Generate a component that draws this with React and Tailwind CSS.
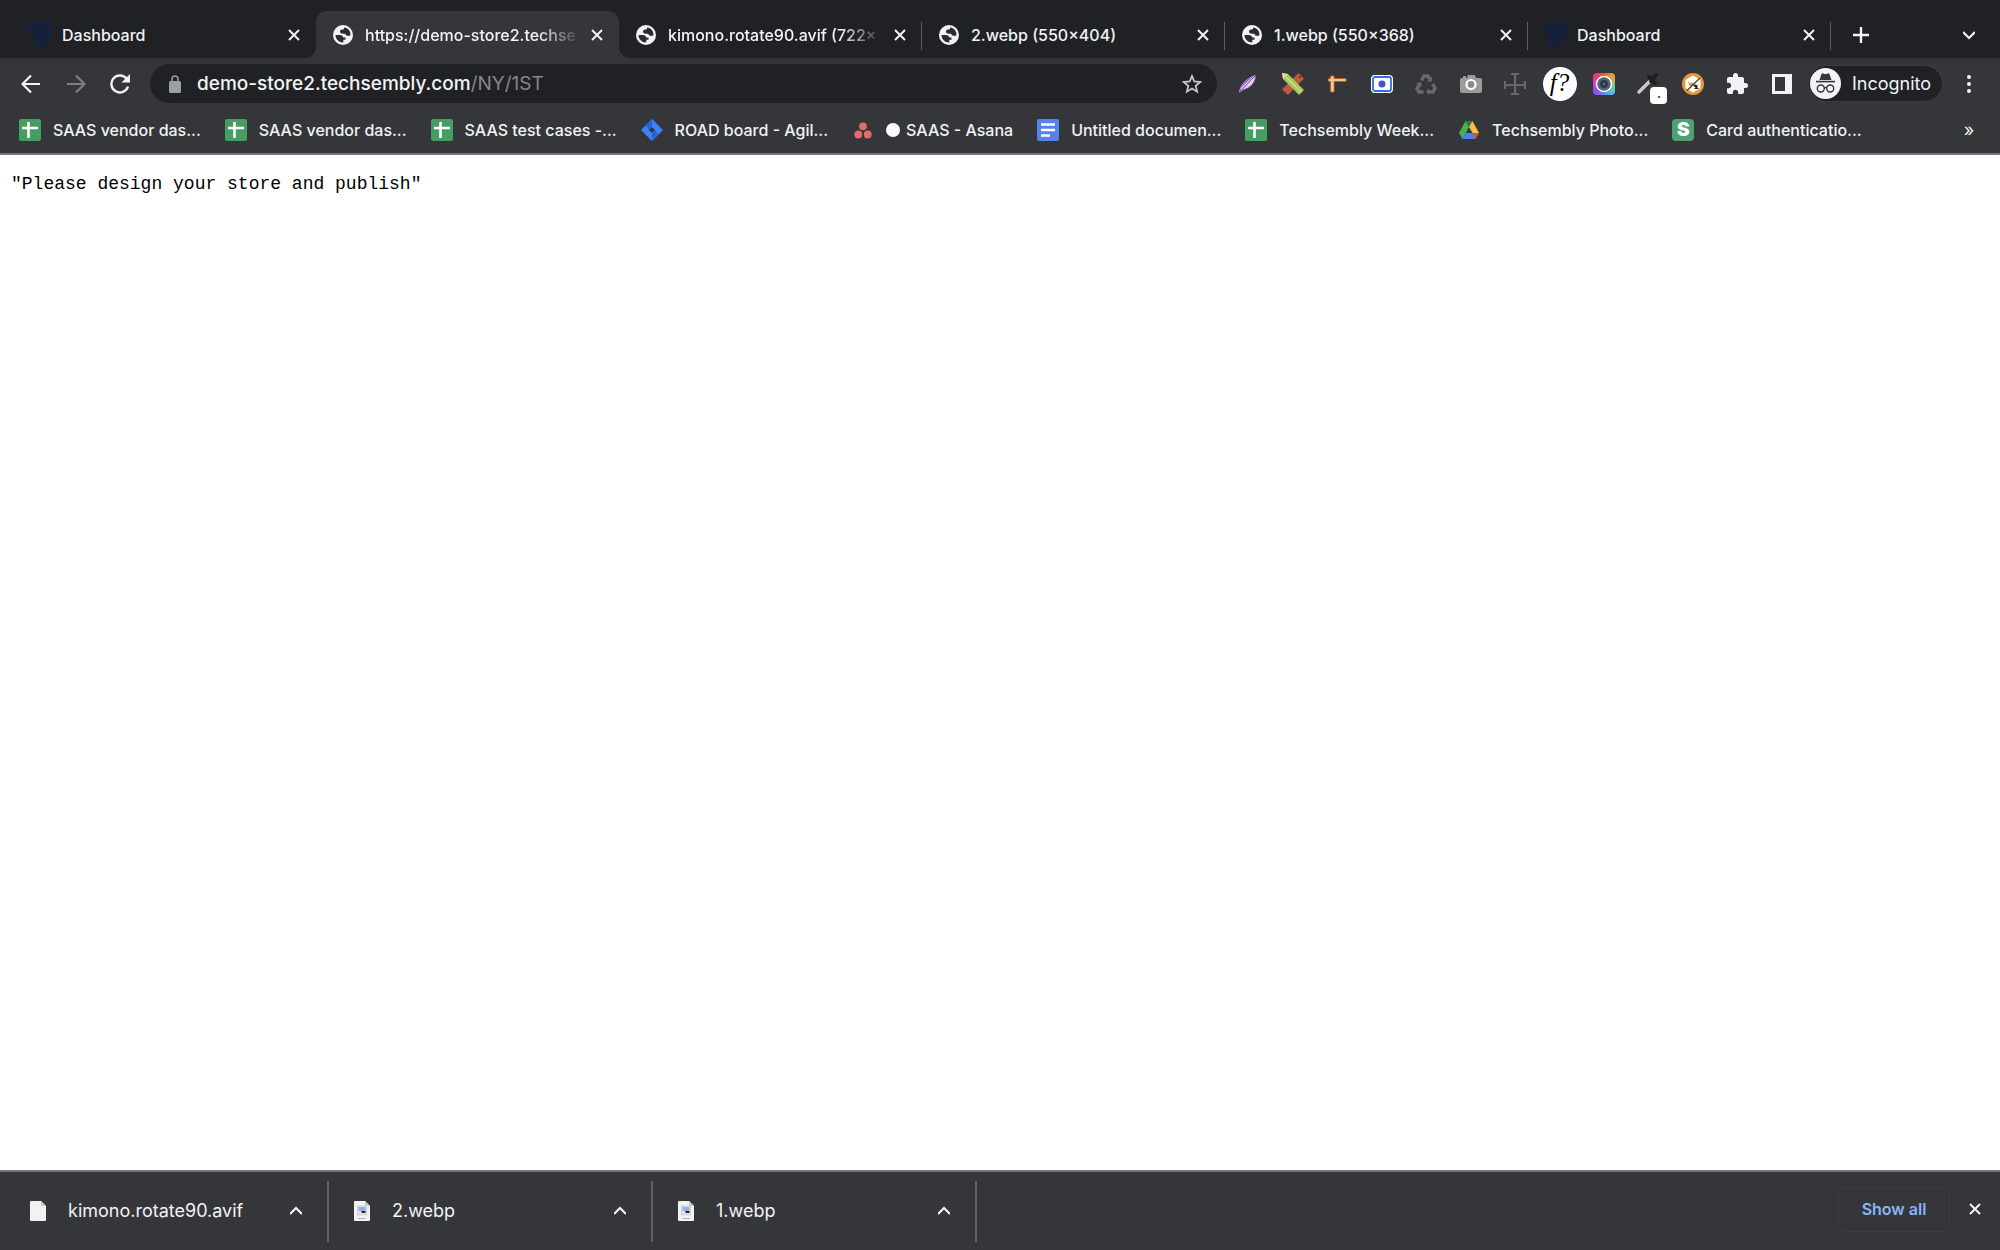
import clsx from 'clsx'

const tabs = [
  { id: 1, title: 'Dashboard', icon: 'ts' },
  { id: 2, title: 'https://demo-store2.techse', icon: 'globe', active: true, fade: true },
  { id: 3, title: 'kimono.rotate90.avif (722×', icon: 'globe', fade: true },
  { id: 4, title: '2.webp (550×404)', icon: 'globe' },
  { id: 5, title: '1.webp (550×368)', icon: 'globe' },
  { id: 6, title: 'Dashboard', icon: 'ts' },
]

const bookmarks = [
  { id: 1, name: 'SAAS vendor das...', icon: <SheetsIcon /> },
  { id: 2, name: 'SAAS vendor das...', icon: <SheetsIcon /> },
  { id: 3, name: 'SAAS test cases -...', icon: <SheetsIcon /> },
  { id: 4, name: 'ROAD board - Agil...', icon: <JiraIcon /> },
  { id: 5, name: 'SAAS - Asana', icon: <AsanaIcon />, dot: true },
  { id: 6, name: 'Untitled documen...', icon: <DocsIcon /> },
  { id: 7, name: 'Techsembly Week...', icon: <SheetsIcon /> },
  { id: 8, name: 'Techsembly Photo...', icon: <DriveIcon /> },
  { id: 9, name: 'Card authenticatio...', icon: <CardIcon /> },
]

const extensions = [
  { id: 'feather', name: 'Feather', icon: <FeatherIcon /> },
  { id: 'tools', name: 'Design tools', icon: <PencilRulerIcon /> },
  { id: 'ruler', name: 'Page ruler', icon: <RulerIcon /> },
  { id: 'recorder', name: 'Screen recorder', icon: <RecorderIcon /> },
  { id: 'recycle', name: 'Clear cache', icon: <RecycleIcon /> },
  { id: 'camera', name: 'Screenshot', icon: <CameraIcon /> },
  { id: 'dimensions', name: 'Dimensions', icon: <DimensionsIcon /> },
  { id: 'font', name: 'Font finder', icon: <FontIcon /> },
  { id: 'lens', name: 'Lens', icon: <LensIcon /> },
  { id: 'picker', name: 'Color picker', icon: <PickerIcon /> },
  { id: 'blocker', name: 'Image size', icon: <OrangeIcon /> },
  { id: 'puzzle', name: 'Extensions', icon: <PuzzleIcon /> },
  { id: 'panel', name: 'Side panel', icon: <PanelIcon /> },
]

const downloads = [
  { id: 1, name: 'kimono.rotate90.avif' },
  { id: 2, name: '2.webp', preview: true },
  { id: 3, name: '1.webp', preview: true },
]

function TsIcon() {
  return (
    <svg className="w-[22px] h-[22px]" viewBox="0 0 22 22" fill="none" stroke="#0b1f50" strokeWidth="2">
      <path d="M0 1h22M1 1v5h4v9h4V6h3v8H9M21 5h-6v4M21 5v6h-5v10H4" />
    </svg>
  )
}

function GlobeIcon() {
  return (
    <svg className="w-5 h-5" viewBox="0 0 20 20">
      <circle cx="10" cy="10" r="10" fill="#f1f3f4" />
      <g fill="#2b2c2f">
        <path d="M2.500 10h4.300c2 0 3.200.9 3.400 2.500h2.300v2.200h-2.200v2.800C6 17.600 2.500 14.200 2.500 10z" />
        <path d="M11 2.500v1.700c-2.700 0-4 .8-4 2.300C7 8 8.300 8.700 10 8.700h2.300c.4 1.900 1.800 2.600 5.100 1.800C18 6.200 15 2.700 11 2.500z" />
      </g>
    </svg>
  )
}

function CloseIcon() {
  return (
    <svg className="w-3 h-3" viewBox="0 0 12 12" fill="none" stroke="#f1f3f4" strokeWidth="2">
      <path d="M1 1l10 10M11 1L1 11" />
    </svg>
  )
}

function SheetsIcon() {
  return (
    <svg className="w-[22px] h-[22px]" viewBox="0 0 22 22">
      <rect width="22" height="22" rx="2" fill="#459d62" />
      <path d="M3 9h16M9.500 3v16" stroke="#fff" strokeWidth="2.600" />
    </svg>
  )
}

function JiraIcon() {
  return (
    <svg className="w-[22px] h-[22px]" viewBox="0 0 22 22">
      <path d="M11 0l11 11-11 11L0 11z" fill="#3f82f7" />
      <path d="M11 0v7.500L7.500 11 5 6zM11 22v-7.500l3.500-3.500 2.500 5z" fill="#2463d6" />
      <path d="M11 8l3 3-3 3-3-3z" fill="#35363a" />
    </svg>
  )
}

function AsanaIcon() {
  return (
    <svg className="w-[22px] h-[22px]" viewBox="0 0 22 22" fill="#e16d6d">
      <circle cx="11" cy="7.300" r="3.900" />
      <circle cx="6.300" cy="15.500" r="3.900" />
      <circle cx="15.700" cy="15.500" r="3.900" />
    </svg>
  )
}

function DocsIcon() {
  return (
    <svg className="w-[22px] h-[22px]" viewBox="0 0 22 22">
      <rect width="22" height="22" rx="2" fill="#5383ec" />
      <path d="M4 5.500h14M4 11h14M4 16.500h9" stroke="#fff" strokeWidth="2.400" />
    </svg>
  )
}

function DriveIcon() {
  return (
    <svg className="w-[22px] h-[22px]" viewBox="0 0 22 22">
      <path d="M7.500 2h7L11 8z" fill="#2f7d3b" />
      <path d="M7.500 2L11 8 4.500 20 1 14z" fill="#4caf50" />
      <path d="M14.500 2L21 14h-6.500L11 8z" fill="#f6c142" />
      <path d="M7.500 14H15l2.500 6h-13z" fill="#4a80ec" />
      <path d="M14.500 14H21l-3.500 6z" fill="#d9503f" />
    </svg>
  )
}

function CardIcon() {
  return (
    <span className="w-[22px] h-[22px] rounded-sm bg-[#4da274] text-white text-[19px] leading-[22px] font-black text-center">S</span>
  )
}

function FeatherIcon() {
  return (
    <svg className="w-6 h-6" viewBox="0 0 24 24">
      <path d="M3 21C4 13 10 6 20 3c-.5 7-5 13-13 15z" fill="#e0d3ee" />
      <path d="M3 21C4 13 10 6 20 3 13 8 8 13 3 21z" fill="#a56bd0" />
      <path d="M5 17C9 13 14 8 18 5" fill="none" stroke="#e0d3ee" strokeWidth="1.200" />
      <path d="M3 21C9 14 14 9 20 3c-.500 7-5 13-13 15" fill="none" stroke="#7d3fae" strokeWidth="1" />
    </svg>
  )
}

function PencilRulerIcon() {
  return (
    <svg className="w-6 h-6" viewBox="0 0 24 24">
      <path d="M17.500 1l5.500 5.500L7 23l-6-5.500z" fill="#c0573f" />
      <circle cx="19" cy="5" r="1" fill="#5e2418" />
      <path d="M1 1l6 1 16 16-5 5L2 7z" fill="#a9c75c" />
      <path d="M4.500 4.500l16 16" stroke="#cbe27f" strokeWidth="1.500" />
      <path d="M1 1l6 1-5 5z" fill="#ead9a4" />
    </svg>
  )
}

function RulerIcon() {
  return (
    <svg className="w-6 h-6" viewBox="0 0 24 24" fill="#efc793" stroke="#a8662c" strokeWidth="1">
      <path d="M5.500 4h3.500v16H5.500z" />
      <path d="M3.500 6.500h17.500v3H3.500z" />
      <path d="M6 5h2.500v14H6z" stroke="none" />
    </svg>
  )
}

function RecorderIcon() {
  return (
    <svg className="w-6 h-6" viewBox="0 0 24 24">
      <rect x="1" y="3" width="22" height="18" rx="4" fill="#fff" />
      <rect x="3" y="5" width="18" height="14" rx="2" fill="#fff" stroke="#2f6fec" strokeWidth="1.800" />
      <circle cx="12" cy="12" r="3.500" fill="#4852c8" />
    </svg>
  )
}

function RecycleIcon() {
  return (
    <svg className="w-6 h-6" viewBox="0 0 24 24" fill="none" stroke="#68696b" strokeWidth="3.400">
      <path d="M7.500 8.500L10 4h4l2 3.500" />
      <path d="M18.500 12l2.500 4-2 4h-5" />
      <path d="M9.500 20H5l-2-3.500 2.500-4" />
      <path d="M18 4.500v5h-5zM15 16v7l-3-3.500zM2 11l5-1 1 5z" fill="#68696b" stroke="none" />
    </svg>
  )
}

function CameraIcon() {
  return (
    <svg className="w-6 h-6" viewBox="0 0 24 24">
      <path d="M3 6h1V4h3v2h1l1-3h7l1 3h4a2 2 0 012 2v11a2 2 0 01-2 2H3a2 2 0 01-2-2V8a2 2 0 012-2z" fill="#9b9b9c" />
      <circle cx="12" cy="12.500" r="4.500" fill="#8b8b8c" stroke="#fff" strokeWidth="2.200" />
    </svg>
  )
}

function DimensionsIcon() {
  return (
    <svg className="w-6 h-6" viewBox="0 0 24 24" fill="none" stroke="#68696b" strokeWidth="2">
      <path d="M12 2v20M1 13h22M8 2h8M8 22h8M2 9v8M22 9v8" />
    </svg>
  )
}

function FontIcon() {
  return (
    <span
      className="w-[34px] h-[34px] shrink-0 rounded-full bg-white text-black text-[25px] leading-[32px] italic text-center font-medium"
      style={{ fontFamily: '"Liberation Serif", serif' }}
    >
      f?
    </span>
  )
}

function LensIcon() {
  return (
    <span className="w-[22px] h-[22px] rounded-sm bg-[conic-gradient(#e8553a,#e8a03a,#8fc96a,#4fc3d9,#4f8ff0,#8a4ff0,#d83fe0,#e83a70,#e8553a)] flex items-center justify-center">
      <svg className="w-[18px] h-[18px]" viewBox="0 0 18 18">
        <circle cx="9" cy="9" r="7.500" fill="#56626c" stroke="#fff" strokeWidth="1.600" />
        <circle cx="9" cy="9" r="4" fill="#2c3d4c" />
        <circle cx="9" cy="9" r="1" fill="#5588a8" />
      </svg>
    </span>
  )
}

function PickerIcon() {
  return (
    <span className="relative">
      <svg className="w-6 h-6" viewBox="0 0 24 24">
        <path d="M3 20L14 9" stroke="#c9c9c9" strokeWidth="3.500" strokeLinecap="round" />
        <path d="M13 5l6 6M15 9l5-6" stroke="#1e1e1f" strokeWidth="4" strokeLinecap="round" />
      </svg>
      <span className="absolute left-[14px] top-[15px] w-[17px] h-[17px] rounded-sm bg-white text-[#333] text-xs leading-[14px] font-bold text-center">.</span>
    </span>
  )
}

function OrangeIcon() {
  return (
    <svg className="w-[22px] h-[22px]" viewBox="0 0 22 22">
      <circle cx="11" cy="11" r="11" fill="#e59a36" />
      <path d="M11 2.500l7.500 4.200v8.600L11 19.500l-7.500-4.200V6.700z" fill="#fff" />
      <path d="M5.500 8l2.500 2 3-.5 2 1.500-4 3-1.500-1.500z" fill="#e59a36" />
      <path d="M11 12.500l2-1 3 1-1 1.500 2 2h-5l1.500-1.500z" fill="#222" />
      <path d="M5 17.500L18 5" stroke="#4a3a22" strokeWidth="1.200" />
    </svg>
  )
}

function PuzzleIcon() {
  return (
    <svg className="w-6 h-6" viewBox="0 0 24 24" fill="#f1f3f4">
      <path d="M20.500 11H19V7c0-1.100-.9-2-2-2h-4V3.500a2.500 2.500 0 00-5 0V5H4c-1.100 0-1.990.9-1.990 2v3.800H3.500c1.490 0 2.700 1.210 2.700 2.700s-1.210 2.700-2.700 2.700H2V20c0 1.100.9 2 2 2h3.800v-1.500c0-1.490 1.210-2.700 2.700-2.700s2.700 1.210 2.700 2.700V22H17c1.100 0 2-.9 2-2v-4h1.500a2.500 2.500 0 000-5z" />
    </svg>
  )
}

function PanelIcon() {
  return (
    <svg className="w-5 h-5" viewBox="0 0 20 20">
      <path fillRule="evenodd" d="M0 0h20v20H0zM3 3v14h10V3z" fill="#f1f3f4" />
    </svg>
  )
}

function IncognitoIcon() {
  return (
    <svg className="w-[31px] h-[31px]" viewBox="0 0 31 31">
      <circle cx="15.500" cy="15.500" r="15.500" fill="#f1f3f4" />
      <path d="M9.500 12l2-6c.3-.8 1-.8 1.600-.6l2.400.8 2.400-.8c.700-.2 1.300.1 1.600.8l2 5.800z" fill="#35363a" />
      <path d="M6 13.600h19" stroke="#35363a" strokeWidth="1.600" />
      <g fill="none" stroke="#35363a" strokeWidth="1.400">
        <circle cx="10.800" cy="20.500" r="3.500" />
        <circle cx="20.200" cy="20.500" r="3.500" />
        <path d="M14.300 20c.8-.6 1.600-.6 2.400 0" />
      </g>
    </svg>
  )
}

function FileIcon({ preview }) {
  return (
    <svg className="w-4 h-5" viewBox="0 0 16 20">
      <path d="M1 0h10l5 5v14a1 1 0 01-1 1H1a1 1 0 01-1-1V1a1 1 0 011-1z" fill="#f2f2f2" />
      <path d="M11 0v5h5z" fill="#c9c9c9" />
      {preview && (
        <g>
          <rect x="3.500" y="5" width="9" height="9" fill="#e2e2e6" stroke="#c2c2c6" strokeWidth=".6" />
          <path d="M4.500 6h7v4h-7z" fill="#8fb0ea" />
          <path d="M7 10h4.500v2H8z" fill="#23283a" />
          <path d="M4 17.500h8" stroke="#b5b5b5" />
        </g>
      )}
    </svg>
  )
}

function Tab({ tab }) {
  return (
    <div
      role="tab"
      aria-selected={!!tab.active}
      className={clsx(
        'relative flex items-center w-[303px] min-w-0 h-[47px] px-4',
        tab.active ? 'bg-[#35363a] rounded-t-[11px]' : 'bg-[#202124]'
      )}
    >
      <span className="w-[22px] shrink-0 flex justify-center">{tab.icon === 'ts' ? <TsIcon /> : <GlobeIcon />}</span>
      <span
        className={clsx(
          'ml-[11px] w-[216px] overflow-hidden whitespace-nowrap',
          tab.fade && 'mask-r-from-80% mask-r-to-100%'
        )}
      >
        {tab.title}
      </span>
      <button className="ml-[10px] shrink-0" aria-label="Close tab">
        <CloseIcon />
      </button>
      {tab.active && (
        <>
          <span className="absolute bottom-0 -left-[11px] w-[11px] h-[11px] bg-[radial-gradient(circle_at_0_0,#202124_11px,#35363a_11px)]"></span>
          <span className="absolute bottom-0 -right-[11px] z-10 w-[11px] h-[11px] bg-[radial-gradient(circle_at_100%_0,#202124_11px,#35363a_11px)]"></span>
        </>
      )}
      {tab.id > 2 && <span className="absolute right-0 top-[11px] w-px h-7 bg-[#5b5d61]"></span>}
    </div>
  )
}

export default function App() {
  return (
    <div
      className="min-h-screen flex flex-col bg-white text-[#f1f3f4] text-[16px] leading-6"
      style={{ fontFamily: 'Inter, "Liberation Sans", sans-serif' }}
    >
      {/* Tab strip */}
      <div className="flex items-end h-[58px] bg-[#202124] pl-[13px] font-medium">
        <div role="tablist" className="flex min-w-0">
          {tabs.map((tab) => (
            <Tab key={tab.id} tab={tab} />
          ))}
        </div>
        <button className="w-[60px] h-[47px] flex items-center justify-center" aria-label="New tab">
          <svg className="w-4 h-4" viewBox="0 0 16 16" stroke="#f1f3f4" strokeWidth="2.400">
            <path d="M8 0v16M0 8h16" />
          </svg>
        </button>
        <button className="ml-auto w-[62px] h-[47px] flex items-center justify-center" aria-label="Search tabs">
          <svg className="w-3 h-3" viewBox="0 0 12 12" fill="none" stroke="#f1f3f4" strokeWidth="2.200">
            <path d="M0 3l6 6 6-6" />
          </svg>
        </button>
      </div>

      {/* Toolbar */}
      <div className="flex items-center h-[51px] bg-[#35363a] pl-2">
        <button className="w-[45px] flex justify-center" aria-label="Back">
          <svg className="w-5 h-5" viewBox="0 0 20 20" fill="none" stroke="#f1f3f4" strokeWidth="2.200">
            <path d="M19 10H2M10 1.500L1.500 10l8.500 8.500" />
          </svg>
        </button>
        <button className="w-[45px] flex justify-center" aria-label="Forward">
          <svg className="w-5 h-5" viewBox="0 0 20 20" fill="none" stroke="#7d7e81" strokeWidth="2.200">
            <path d="M1 10h17M10 1.500l8.500 8.500-8.500 8.500" />
          </svg>
        </button>
        <button className="w-[44px] flex justify-center" aria-label="Reload">
          <svg className="w-5 h-5" viewBox="0 0 20 20" fill="none" stroke="#f1f3f4" strokeWidth="2.400">
            <path d="M16.800 5A8.500 8.500 0 1018 12.500" />
            <path d="M20 0v8.500h-8.500z" fill="#f1f3f4" stroke="none" />
          </svg>
        </button>
        <div className="ml-2 flex-1 min-w-0 flex items-center h-[39px] rounded-full bg-[#202124] pl-[19px] pr-[15px]">
          <svg className="w-3 h-[18px]" viewBox="0 0 12 18" fill="#9aa0a6">
            <rect y="6" width="12" height="12" rx="1.500" />
            <path d="M3 7V4a3 3 0 016 0v3" fill="none" stroke="#9aa0a6" strokeWidth="1.600" />
          </svg>
          <a href="#" className="ml-4 flex-1 text-[19px] whitespace-nowrap">
            <span className="font-medium">demo-store2.techsembly.com</span>
            <span className="text-[#85878a]">/NY/1ST</span>
          </a>
          <button aria-label="Bookmark this tab">
            <svg className="w-5 h-5" viewBox="0 0 20 20" fill="none" stroke="#c4c6c9" strokeWidth="1.800">
              <path d="M10 2l2.300 5.500 6 .5-4.600 3.900 1.400 5.800L10 14.600l-5.100 3.100 1.400-5.800L1.700 8l6-.5z" />
            </svg>
          </button>
        </div>
        <div className="ml-[9px] w-[578px] shrink-0 flex items-center">
          {extensions.map((ext) => (
            <button key={ext.id} className="flex-1 flex items-center justify-center" aria-label={ext.name}>
              {ext.icon}
            </button>
          ))}
        </div>
        <button className="ml-1 w-[135px] h-[37px] shrink-0 flex items-center rounded-full bg-[#202124] border border-[#3c3d41] pl-px text-[18px]">
          <IncognitoIcon />
          <span className="ml-[11px]">Incognito</span>
        </button>
        <button className="w-[57px] pl-6 shrink-0" aria-label="Menu">
          <svg className="w-1 h-5" viewBox="0 0 4 20" fill="#f1f3f4">
            <circle cx="2" cy="3" r="2" />
            <circle cx="2" cy="10" r="2" />
            <circle cx="2" cy="17" r="2" />
          </svg>
        </button>
      </div>

      {/* Bookmarks bar */}
      <div className="flex items-center h-[46px] bg-[#35363a] border-b-2 border-[#77787b] pl-[19px] pb-[3px]">
        <div className="flex items-center gap-6 font-medium">
          {bookmarks.map((mark) => (
            <a key={mark.id} href="#" className="flex items-center gap-3 whitespace-nowrap">
              {mark.icon}
              <span className="flex items-center gap-[6px]">
                {mark.dot && <span className="w-[14px] h-[14px] rounded-full bg-white"></span>}
                {mark.name}
              </span>
            </a>
          ))}
        </div>
        <button className="ml-auto w-[62px] text-center text-[18px]" aria-label="More bookmarks">»</button>
      </div>

      {/* Page */}
      <main className="flex-1 px-[11px] py-[17px]">
        <pre className="text-[18px] leading-6 text-black" style={{ fontFamily: '"Liberation Mono", monospace' }}>
          "Please design your store and publish"
        </pre>
      </main>

      {/* Downloads shelf */}
      <div className="flex items-center h-[80px] bg-[#35363a] border-t-2 border-[#77787b] text-[18px] pl-[5px]">
        {downloads.map((file) => (
          <div key={file.id} className="w-[324px] h-[61px] flex items-center border-r-2 border-[#5f6064] px-[25px]">
            <FileIcon preview={file.preview} />
            <a href="#" className="ml-[22px] flex-1">{file.name}</a>
            <button aria-label="Download options">
              <svg className="w-3 h-3" viewBox="0 0 12 12" fill="none" stroke="#f1f3f4" strokeWidth="2.200">
                <path d="M0 9l6-6 6 6" />
              </svg>
            </button>
          </div>
        ))}
        <button className="ml-auto mb-1 w-[112px] h-[45px] rounded-md border border-[#3c3d41] text-[#8ab4f8] text-[16px] font-semibold">Show all</button>
        <button className="mb-1 w-[50px] flex items-center justify-center" aria-label="Close downloads">
          <CloseIcon />
        </button>
      </div>
    </div>
  )
}
